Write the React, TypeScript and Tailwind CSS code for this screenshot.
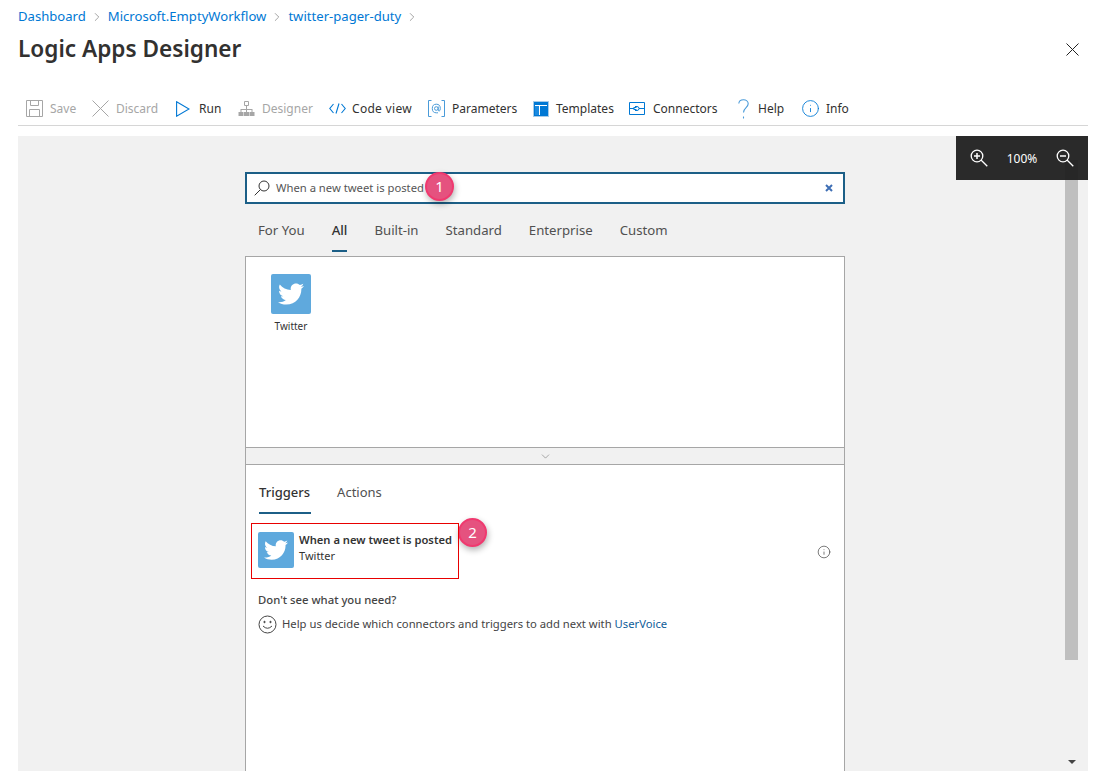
import { FaTwitter } from "react-icons/fa";
import { ChevronRight, ChevronDown, Info } from "lucide-react";

const font = "font-['Noto_Sans',sans-serif]";

const SaveIcon = () => (
  <svg width="17" height="17" viewBox="0 0 17 17" fill="none" stroke="#a6a6a6" strokeWidth="1">
    <path d="M0.500 0.500h16v16h-16z" />
    <path d="M4.500 0.500v5h8v-5M3.500 16.500v-7h10v7" />
  </svg>
);

const LineX = ({ size, color }: { size: number; color: string }) => (
  <svg width={size} height={size} viewBox={`0 0 ${size} ${size}`} stroke={color} strokeWidth="1">
    <path d={`M0.500 0.500L${size - 0.5} ${size - 0.5}M${size - 0.5} 0.500L0.500 ${size - 0.5}`} />
  </svg>
);

const RunIcon = () => (
  <svg width="14" height="16" viewBox="0 0 14 16" fill="none" stroke="#0078d4" strokeWidth="1.100">
    <path d="M0.600 0.800L13 8L0.600 15.200z" />
  </svg>
);

const DesignerIcon = () => (
  <svg width="17" height="16" viewBox="0 0 17 16" fill="#a6a6a6">
    <path d="M6.500 0.500h4v4h-4z" fill="none" stroke="#a6a6a6" />
    <path d="M8 5h1v3h5.500v3h-1V9H9v2H8V9H3.500v2h-1V8H8z" />
    <path d="M0.500 11h5v4h-5zM6 11h5v4H6zM11.500 11h5v4h-5z" />
  </svg>
);

const CodeIcon = () => (
  <svg width="17" height="11" viewBox="0 0 17 11" fill="none" stroke="#0078d4" strokeWidth="1.100">
    <path d="M4.500 1L0.800 5.500L4.500 10M12.500 1L16.200 5.500L12.500 10M10 0.500L7 10.500" />
  </svg>
);

const ParametersIcon = () => (
  <svg width="17" height="17" viewBox="0 0 17 17" fill="none" stroke="#4a9bd9" strokeWidth="1">
    <path d="M3.500 0.500H0.500v16h3M13.500 0.500h3v16h-3" />
    <circle cx="8.300" cy="8.500" r="1.800" />
    <path d="M10.200 6.500v3.500q0 1 1 1t1.100-2.500q0-4.300-4-4.300t-4 4.300 4 4.300h1.700" />
  </svg>
);

const TemplatesIcon = () => (
  <svg width="16" height="16" viewBox="0 0 16 16">
    <path d="M0 0h16v16H0z" fill="#a8cbe8" />
    <path d="M1 1h14v14H1z" fill="#0078d4" />
    <path d="M2 4h12v1H2zM6 5h1v9H6z" fill="#fff" />
    <path d="M2 5h4v9H2z" fill="#1b8ae0" />
  </svg>
);

const ConnectorsIcon = () => (
  <svg width="16" height="14" viewBox="0 0 16 14" fill="none" stroke="#0078d4" strokeWidth="1">
    <path d="M0.500 0.500h15v12h-15z" />
    <path d="M0.500 6.500h5M10 6.500h5.500M6 4.500h2a2 2 0 0 1 0 4H6M4.500 5.500h3M4.500 7.500h3" />
  </svg>
);

const HelpIcon = () => (
  <svg width="11" height="20" viewBox="0 0 11 20" fill="none" stroke="#4a9bd9" strokeWidth="1.100">
    <path d="M0.800 4.500C1 2 3 0.700 5.500 0.700S10.200 2.300 10.200 4.800C10.200 8.500 5.500 8.800 5.500 13.500" />
    <path d="M5.500 17.500v2" />
  </svg>
);

const SearchIcon = () => (
  <svg width="16" height="16" viewBox="0 0 16 16" fill="none" stroke="#333" strokeWidth="1">
    <circle cx="10" cy="6" r="5" />
    <path d="M6.500 9.500L0.700 15.300" />
  </svg>
);

const ZoomIcon = ({ plus }: { plus?: boolean }) => (
  <svg width="18" height="18" viewBox="0 0 18 18" fill="none" stroke="#fff" strokeWidth="1.300">
    <circle cx="7" cy="7" r="5.800" />
    <path d="M11 11L17.300 17.300" />
    <path d={plus ? "M4 7h6M7 4v6" : "M4 7h6"} strokeWidth="1.500" />
  </svg>
);

const HappyIcon = () => (
  <svg width="19" height="19" viewBox="0 0 19 19" fill="none" stroke="#444" strokeWidth="1">
    <circle cx="9.500" cy="9.500" r="8.500" />
    <circle cx="6.500" cy="7" r="0.700" fill="#444" />
    <circle cx="12.500" cy="7" r="0.700" fill="#444" />
    <path d="M5 11q4.500 4.500 9 0" />
  </svg>
);

const TwitterTile = ({ size, icon }: { size: string; icon: number }) => (
  <div className={`flex shrink-0 items-center justify-center rounded-[2px] bg-[#5fa9dd] ${size}`}>
    <FaTwitter color="#fff" size={icon} />
  </div>
);

const Badge = ({ n, pos }: { n: number; pos: string }) => (
  <div
    className={`absolute flex size-[29px] items-center justify-center rounded-full border-2 border-[#f0396f] bg-[#e5527f] text-[15px] text-white shadow-[1px_3px_6px_rgba(0,0,0,0.3)] ${pos}`}
  >
    {n}
  </div>
);

const toolbar = [
  { label: "Save", icon: <SaveIcon />, off: true, w: "w-[66px]", gap: "gap-[7px]" },
  { label: "Discard", icon: <LineX size={17} color="#a6a6a6" />, off: true, w: "w-[84px]", gap: "gap-[7px]" },
  { label: "Run", icon: <RunIcon />, w: "w-[62px]", gap: "gap-[9px]" },
  { label: "Designer", icon: <DesignerIcon />, off: true, w: "w-[91px]", gap: "gap-[7px]" },
  { label: "Code view", icon: <CodeIcon />, w: "w-[99px]", gap: "gap-[6px]" },
  { label: "Parameters", icon: <ParametersIcon />, w: "w-[105px]", gap: "gap-[7px]" },
  { label: "Templates", icon: <TemplatesIcon />, w: "w-[96px]", gap: "gap-[7px]" },
  { label: "Connectors", icon: <ConnectorsIcon />, w: "w-[109px]", gap: "gap-[8px]" },
  { label: "Help", icon: <HelpIcon />, w: "w-[63px]", gap: "gap-[9px]" },
  { label: "Info", icon: <Info size={19} strokeWidth={1.1} color="#0078d4" />, w: "w-[60px]", gap: "gap-[6px]" },
];

const tabs = ["For You", "All", "Built-in", "Standard", "Enterprise", "Custom"];

export default function App() {
  return (
    <div className={`relative flex h-[774px] flex-col overflow-hidden bg-white pl-[18px] pr-2 ${font}`}>
      <nav className="flex h-[32px] items-center gap-1 pt-[1px] text-[13.100px] text-[#0078d4]">
        <span>Dashboard</span>
        <ChevronRight size={14} strokeWidth={1} color="#666" />
        <span>Microsoft.EmptyWorkflow</span>
        <ChevronRight size={14} strokeWidth={1} color="#666" />
        <span>twitter-pager-duty</span>
        <ChevronRight size={14} strokeWidth={1} color="#666" />
      </nav>
      <header className="flex h-[36px] items-center justify-between">
        <h1 className="-mt-[2px] text-[22.600px] font-semibold text-[#323130]">Logic Apps Designer</h1>
        <div className="mb-[2px] mr-[9px]">
          <LineX size={13} color="#222" />
        </div>
      </header>
      <div className="mt-[24px] flex h-[34px] items-center border-b border-[#d6d6d6] pl-2 text-[12px]">
        {toolbar.map((t) => (
          <div key={t.label} className={`flex shrink-0 items-center ${t.w} ${t.gap} ${t.off ? "text-[#a6a6a6]" : "text-[#323130]"}`}>
            {t.icon}
            <span className={t.label === "Code view" ? "tracking-[0.3px]" : undefined}>{t.label}</span>
          </div>
        ))}
      </div>

      <main className="relative mt-[10px] h-[635px] overflow-hidden bg-[#f1f1f1] pl-[227px] pt-[36px]">
        <div className="flex h-[32px] w-[600px] items-center border-2 border-[#1c5f87] bg-white pl-[7px] pr-[10px] text-[11.250px] text-[#555]">
          <SearchIcon />
          <span className="ml-[6px] flex-1 pt-px">When a new tweet is posted</span>
          <svg width="8" height="8" viewBox="0 0 8 8" stroke="#3f6fb5" strokeWidth="2">
            <path d="M1 1l6 6M7 1l-6 6" />
          </svg>
        </div>

        <div className="mt-[4px] flex h-[44px] gap-[27px] pl-[13px] text-[13.200px] text-[#505050]">
          {tabs.map((t) => (
            <div key={t} className={`flex h-full items-center border-b-2 pt-[3px] ${t === "All" ? "border-[#1c5f87] font-medium text-[#333]" : "border-transparent"}`}>
              {t}
            </div>
          ))}
        </div>

        <section className="mt-[4px] w-[600px] border border-b-0 border-[#a6a6a6] bg-white">
          <div className="h-[190px] pl-[25px] pt-[17px]">
            <div className="flex w-[40px] flex-col items-center">
              <TwitterTile size="size-[40px]" icon={26} />
              <span className="mt-[5px] text-[10px] text-[#333]">Twitter</span>
            </div>
          </div>
          <div className="flex h-[18px] items-center justify-center border-y border-[#a6a6a6] bg-[#f1f1f1]">
            <ChevronDown size={13} strokeWidth={1} color="#666" />
          </div>
          <div className="h-[320px] px-3">
            <div className="flex h-[49px] gap-[26px] pl-px text-[13px] text-[#505050]">
              <div className="flex items-center border-b-2 border-[#1c5f87] pr-px pt-[8px] font-medium text-[#333]">Triggers</div>
              <div className="flex items-center pb-[2px] pt-[8px]">Actions</div>
            </div>
            <div className="flex h-[72px] items-center justify-between pr-px">
              <div className="flex items-center gap-[5px]">
                <TwitterTile size="size-[36px]" icon={24} />
                <div className="pb-[4px] text-[11.200px] leading-[16px] text-[#333]">
                  <div className="font-semibold">When a new tweet is posted</div>
                  <div className="text-[11px]">Twitter</div>
                </div>
              </div>
              <Info size={14} strokeWidth={1.2} color="#444" className="mt-[3px]" />
            </div>
            <div className="mt-[6px] text-[11.300px] font-medium leading-[16px] text-[#444]">Don't see what you need?</div>
            <div className="mt-[7px] flex items-center gap-[5px] text-[11.250px] text-[#444]">
              <HappyIcon />
              <span>
                Help us decide which connectors and triggers to add next with{" "}
                <span className="text-[#105d99]">UserVoice</span>
              </span>
            </div>
          </div>
        </section>

        {/* scrollbar */}
        <div className="absolute right-[10px] top-[24px] h-[500px] w-[13px] bg-[#bfbfbf]" />
        <div className="absolute bottom-[7px] right-[12px] size-0 border-x-[4px] border-t-[4px] border-x-transparent border-t-[#444]" />

        {/* zoom controls */}
        <div className="absolute right-0 top-0 flex h-[44px] w-[132px] items-center justify-between bg-[#1f1f1f]/95 px-[14px] text-[12px] text-white">
          <ZoomIcon plus />
          <span className="pt-px">100%</span>
          <ZoomIcon />
        </div>
      </main>

      <Badge n={1} pos="left-[425px] top-[172px]" />
      <Badge n={2} pos="left-[458px] top-[518px]" />
      <div className="absolute left-[251px] top-[523px] h-[56px] w-[208px] border border-[#e80000]" />
    </div>
  );
}
